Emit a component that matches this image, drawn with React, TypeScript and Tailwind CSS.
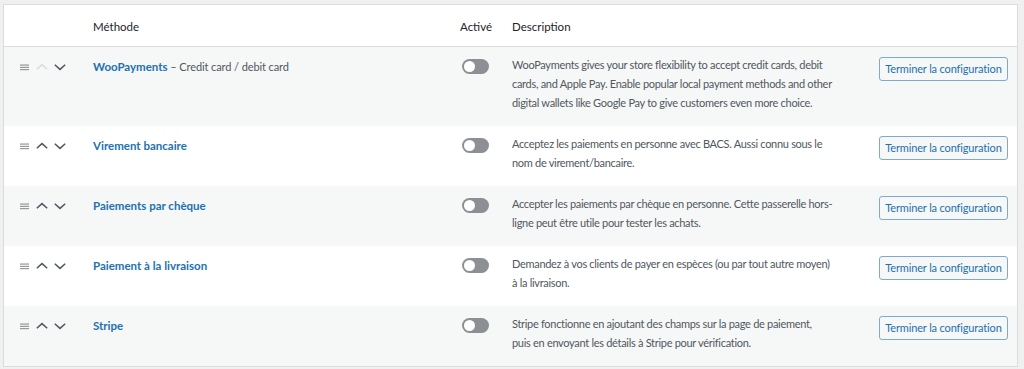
import { memo } from 'react'

type Method = {
  title: string
  subtitle?: string
  lines: string[]
  canMoveUp: boolean
}

const methods: Method[] = [
  {
    title: 'WooPayments',
    subtitle: ' – Credit card / debit card',
    lines: [
      'WooPayments gives your store flexibility to accept credit cards, debit',
      'cards, and Apple Pay. Enable popular local payment methods and other',
      'digital wallets like Google Pay to give customers even more choice.',
    ],
    canMoveUp: false,
  },
  {
    title: 'Virement bancaire',
    lines: ['Acceptez les paiements en personne avec BACS. Aussi connu sous le', 'nom de virement/bancaire.'],
    canMoveUp: true,
  },
  {
    title: 'Paiements par chèque',
    lines: [
      'Accepter les paiements par chèque en personne. Cette passerelle hors-',
      'ligne peut être utile pour tester les achats.',
    ],
    canMoveUp: true,
  },
  {
    title: 'Paiement à la livraison',
    lines: ['Demandez à vos clients de payer en espèces (ou par tout autre moyen)', 'à la livraison.'],
    canMoveUp: true,
  },
  {
    title: 'Stripe',
    lines: [
      'Stripe fonctionne en ajoutant des champs sur la page de paiement,',
      'puis en envoyant les détails à Stripe pour vérification.',
    ],
    canMoveUp: true,
  },
]

// Sort controls
const SortControls = ({ canMoveUp }: { canMoveUp: boolean }) => (
  <div className="flex items-center gap-[6px] h-[19px] mt-[2px] pl-[15px]">
    <svg className="w-[11px] h-[12px] text-[#8c8f94]" viewBox="0 0 11 12" fill="currentColor">
      <rect x="1" y="3.5" width="9" height="1.1" />
      <rect x="1" y="5.8" width="9" height="1.1" />
      <rect x="1" y="8.1" width="9" height="1.1" />
    </svg>
    <svg
      className={`w-[12px] h-[12px] ${canMoveUp ? 'text-[#50575e]' : 'text-[#dcdcde]'}`}
      viewBox="0 0 12 12"
      fill="none"
      stroke="currentColor"
      strokeWidth="1.5"
    >
      <path d="M0.8 8.2 6 3.6l5.2 4.6" />
    </svg>
    <svg className="w-[12px] h-[12px] text-[#50575e]" viewBox="0 0 12 12" fill="none" stroke="currentColor" strokeWidth="1.5">
      <path d="M0.8 3.8 6 8.4 11.2 3.8" />
    </svg>
  </div>
)

// Toggle
const Toggle = () => (
  <div className="flex items-center h-[19px] mt-[2px] pl-[2px]">
    <span className="flex items-center w-[27px] h-[15px] rounded-full bg-[#8c8f94] px-[2px]">
      <span className="w-[11px] h-[11px] rounded-full bg-white" />
    </span>
  </div>
)

// Row
const Row = memo(({ method, index }: { method: Method; index: number }) => (
  <div
    className={`grid grid-cols-[89px_367px_52px_1fr_138px] pt-[8px] pb-[14px] ${
      index % 2 === 0 ? 'bg-[#f6f7f7]' : 'bg-white'
    }`}
  >
    <SortControls canMoveUp={method.canMoveUp} />
    <div className="leading-[19px] whitespace-nowrap">
      <a href="#" className="font-bold text-[11.5px] text-[#2271b1]">
        {method.title}
      </a>
      {method.subtitle && <span className="text-[11px] tracking-[-0.1px] text-[#50575e]">{method.subtitle}</span>}
    </div>
    <Toggle />
    <div className="leading-[19px] text-[#50575e] text-[11px] tracking-[-0.3px]">
      {method.lines.map((line) => (
        <div key={line} className="whitespace-nowrap">
          {line}
        </div>
      ))}
    </div>
    <div>
      <button className="h-[24px] w-[129px] mt-[2px] whitespace-nowrap rounded-[3px] border border-[#7fa9d1] bg-[#f6f7f7] text-[11px] tracking-[-0.15px] text-[#2271b1]">
        Terminer la configuration
      </button>
    </div>
  </div>
))

Row.displayName = 'Row'

// App
export default function App() {
  return (
    <div className="w-[1024px] h-[369px] overflow-hidden bg-[#f0f0f1] pt-[4px] pl-[3px] pr-[6px] font-['Lato',sans-serif] text-[#1d2327]">
      <div className="border border-[#dcdcde] bg-white">
        <div className="grid grid-cols-[89px_367px_52px_1fr_138px] h-[42px] items-center pt-[3px] border-b border-[#dcdcde] text-[11.5px]">
          <div />
          <div>Méthode</div>
          <div>Activé</div>
          <div>Description</div>
          <div />
        </div>
        {methods.map((m, i) => (
          <Row key={m.title} method={m} index={i} />
        ))}
      </div>
    </div>
  )
}
